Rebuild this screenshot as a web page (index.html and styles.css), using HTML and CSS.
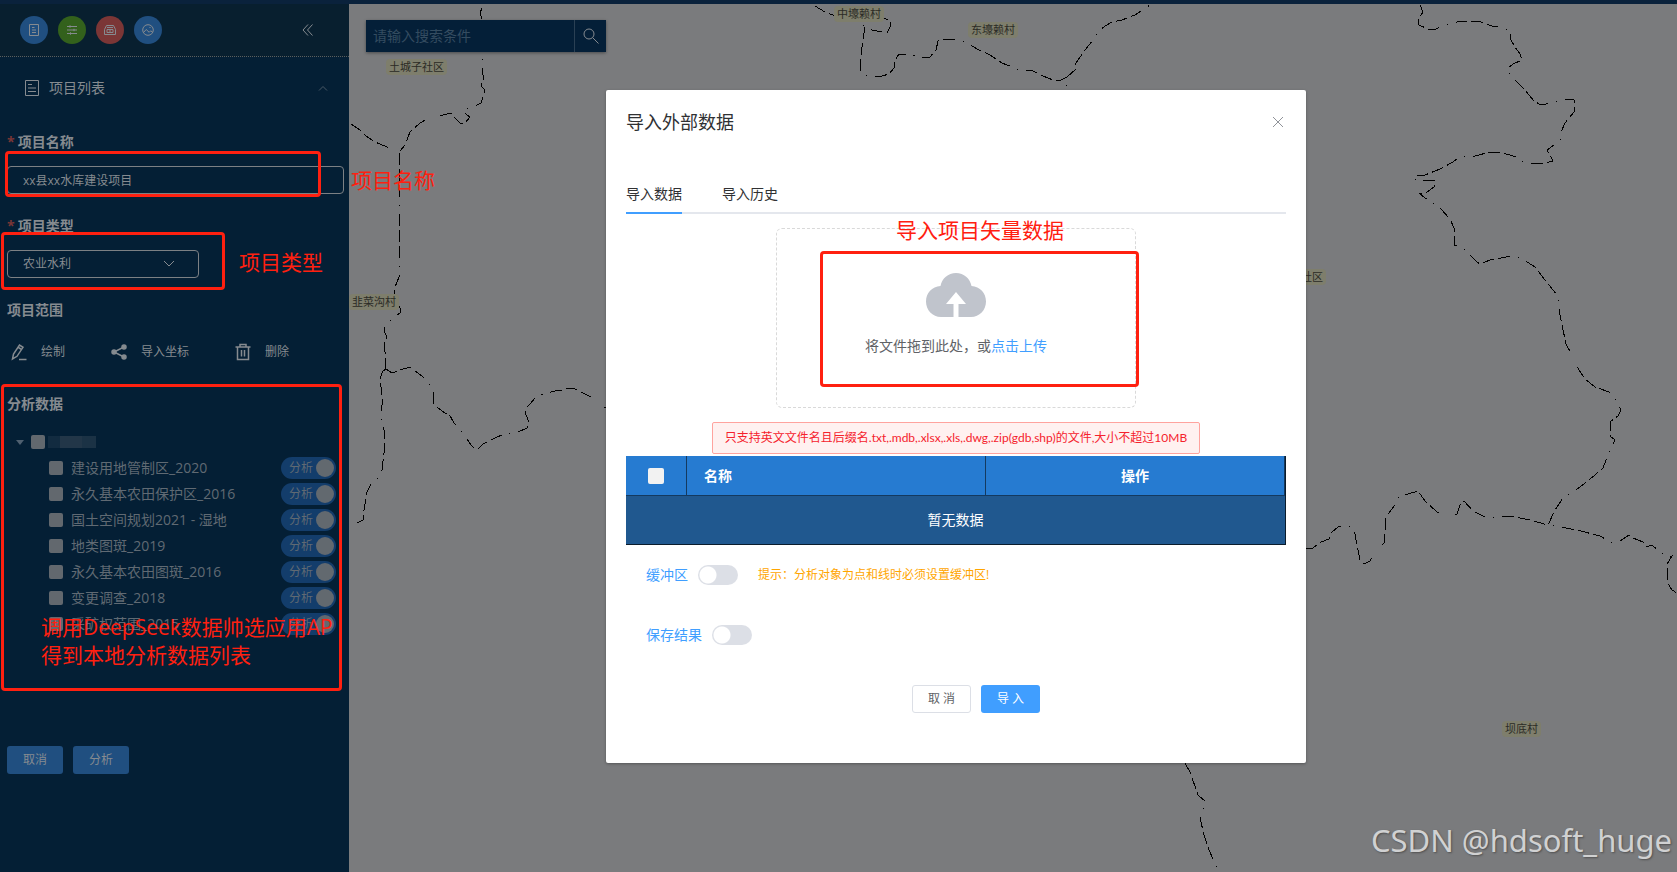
FILE: index.html
```html
<!DOCTYPE html>
<html lang="zh-CN">
	<head>
		<meta charset="UTF-8">
		<title>导入外部数据</title>
		<link rel="stylesheet" href="styles.css">
	</head>
	<body>
		<div class="topbar"></div>

		<div class="page">
			<aside class="sidebar">
				<div class="tools">
					<button class="tool blue" type="button" aria-label="列表">
						<svg width="12" height="12" viewBox="0 0 12 12"><path d="M1.500.5h9v11h-9zM4 3.500h2.500M4 6h4M4 8.500h4"/></svg>
					</button>
					<button class="tool green" type="button" aria-label="设置">
						<svg width="12" height="12" viewBox="0 0 12 12"><path d="M1 2.500h10M1 6h10M1 9.500h10M4 1.300v2.400M8 4.800v2.400M4.500 8.300v2.400"/></svg>
					</button>
					<button class="tool red" type="button" aria-label="归档">
						<svg width="12" height="12" viewBox="0 0 12 12"><path d="M.5 10.500v-5l2-4h7l2 4v5zM3 3.500h6M3 5.500h6v3H3zM5 7h2"/></svg>
					</button>
					<button class="tool blue" type="button" aria-label="图片">
						<svg width="12" height="12" viewBox="0 0 12 12"><circle cx="6" cy="6" r="5.300"/><path d="M1.500 8.500l2.700-3 3 2.800 1.500-1.500 2 1.500M7.500 3.500h1"/></svg>
					</button>
					<button class="collapse" type="button" aria-label="收起">
						<svg width="12" height="12" viewBox="0 0 12 12"><path d="M6 .5L1 6l5 5.500M10.500.5l-5 5.500 5 5.500"/></svg>
					</button>
				</div>

				<div class="panel-title">
					<svg width="16" height="18" viewBox="0 0 16 18"><path d="M1.500 1.500h13v15h-13zM4 5.500h4M4 9h8M4 12.500h8"/></svg>
					<span>项目列表</span>
					<svg class="fold" width="10" height="7" viewBox="0 0 10 7"><path d="M1 5.500l4-4 4 4"/></svg>
				</div>

				<form class="form">
					<label class="label required" for="name">项目名称</label>
					<input class="field" id="name" type="text" value="xx县xx水库建设项目">

					<label class="label required" for="type">项目类型</label>
					<div class="select">
						<select class="field" id="type">
							<option>农业水利</option>
						</select>
						<svg width="12" height="8" viewBox="0 0 12 8"><path d="M1 1l5 5 5-5"/></svg>
					</div>

					<div class="label">项目范围</div>
					<div class="actions">
						<button type="button">
							<svg width="16" height="18" viewBox="0 0 16 18"><path d="M1.500 16l1-5 6-9 3.500 2.300-6 9zM7 4.200l3.500 2.300M8 16.500h7.500"/></svg>
							绘制
						</button>
						<button type="button">
							<svg class="solid" width="16" height="16" viewBox="0 0 16 16"><path d="M13 3L3 8l10 5"/><circle cx="13" cy="3" r="2"/><circle cx="3" cy="8" r="2"/><circle cx="13" cy="13" r="2"/></svg>
							导入坐标
						</button>
						<button type="button">
							<svg width="16" height="18" viewBox="0 0 16 18"><path d="M.5 4h15M5 4V1.500h6V4M2.500 4v12.500h11V4M6.500 7v6.500M9.500 7v6.500"/></svg>
							删除
						</button>
					</div>

					<div class="label">分析数据</div>
					<ul class="tree">
						<li class="root">
							<span class="caret"></span>
							<input class="check" type="checkbox" aria-label="全选">
							<span class="mosaic"></span>
						</li>
						<li>
							<input class="check" type="checkbox" id="d1"><label for="d1">建设用地管制区_2020</label>
							<button class="pill" type="button">分析</button>
						</li>
						<li>
							<input class="check" type="checkbox" id="d2"><label for="d2">永久基本农田保护区_2016</label>
							<button class="pill" type="button">分析</button>
						</li>
						<li>
							<input class="check" type="checkbox" id="d3"><label for="d3">国土空间规划2021 - 湿地</label>
							<button class="pill" type="button">分析</button>
						</li>
						<li>
							<input class="check" type="checkbox" id="d4"><label for="d4">地类图斑_2019</label>
							<button class="pill" type="button">分析</button>
						</li>
						<li>
							<input class="check" type="checkbox" id="d5"><label for="d5">永久基本农田图斑_2016</label>
							<button class="pill" type="button">分析</button>
						</li>
						<li>
							<input class="check" type="checkbox" id="d6"><label for="d6">变更调查_2018</label>
							<button class="pill" type="button">分析</button>
						</li>
						<li>
							<input class="check" type="checkbox" id="d7"><label for="d7">采矿权范围_2015</label>
							<button class="pill" type="button">分析</button>
						</li>
					</ul>

					<div class="buttons">
						<button class="btn dim" type="button">取消</button>
						<button class="btn dim" type="button">分析</button>
					</div>
				</form>
			</aside>

			<main class="map">
				<svg class="borders" viewBox="349 4 1328 868" preserveAspectRatio="xMinYMin slice">
					<polyline points="482,8 480,13 482,19 484,40 483,55 482,64 483,75 484,80 481,83 481,86 484,89 484,94 481,103 475,106 464,110 463,112 470,117 465,123 461,124 456,119 451,113 443,115 432,116 420,123 410,132 405,145 400,151"/>
					<polyline points="351,124 360,130 366,136 375,142 387,147 399,151"/>
					<polyline points="399,153 399,277 395,287 394,294 396,300 400,308 400,313 392,319 385,327 384,331 386,335 386,340 384,345 385,352 386,369"/>
					<polyline points="386,369 392,373 400,370 410,367 423,377 429,384 433,392 434,405 445,413 449,414 454,423 460,429 471,445 475,449 478,449 483,444 495,438 504,434 518,432 527,428 529,422 526,415 525,409 530,404 536,397 543,394 555,391 565,390 567,388 575,389 583,393 591,397 598,404 601,407 606,407"/>
					<polyline points="386,369 383,371 380,378 382,395 382,405 381,415 384,430 384,453 382,470 379,477 371,484 367,492 364,510 363,520 359,522 352,525"/>
					<polyline points="815,6 825,12 833,15 857,22 865,26 872,30 887,33 890,27 890,20 882,18"/>
					<polyline points="865,27 863,40 861,55 860,69 864,75 872,77 882,76 889,74 894,68 895,60 899,54 910,54 920,58 930,57 936,50 938,41 943,39 957,40 966,42 977,49 990,55 1002,63 1017,69 1033,71 1043,76 1053,80 1059,81 1067,77 1066,90"/>
					<polyline points="1067,77 1075,70 1076,63 1085,50 1093,40 1098,32 1105,26 1112,22 1122,20 1135,15 1150,5"/>
					<polyline points="1420,5 1423,12 1418,20 1419,25 1430,30 1436,29 1445,25 1461,21 1478,21 1492,26 1502,27 1507,30 1511,30 1510,38 1515,47 1520,54 1522,60 1513,64 1507,69 1511,75 1517,82 1525,90 1534,101 1541,105 1555,102 1567,99 1574,100 1574,112 1565,123 1561,132 1561,139 1554,145 1547,150 1553,161 1545,163 1533,164 1523,162 1516,157 1500,152 1490,152 1475,156 1459,157 1453,162 1440,169 1430,173 1425,175 1413,175 1416,180 1434,180 1434,187 1426,193 1419,193 1425,198 1440,208 1450,219 1454,228 1454,245 1463,248 1477,262 1480,264 1490,260 1506,257 1514,256 1524,260 1535,267 1545,280 1553,290 1558,296 1560,315 1562,325 1566,344 1571,353 1579,370 1585,379 1595,387 1609,392 1617,401 1621,410 1618,416 1611,421 1610,436 1615,440 1610,450 1603,468 1595,475 1580,487 1563,498 1555,510 1548,525"/>
					<polyline points="1306,549 1313,548 1321,542 1329,539 1332,532 1338,527 1348,526 1354,529 1357,545 1360,560 1364,564 1370,561 1378,548 1384,543 1386,517 1395,505 1399,495 1408,494 1418,491 1425,501 1437,512 1447,516 1457,514 1460,505 1464,501 1473,511 1485,517 1494,518 1510,516 1530,520 1548,525 1560,527 1577,530 1600,536 1612,543 1620,541 1629,535 1633,538 1643,542 1646,547 1652,545 1660,552 1667,557 1672,556 1667,564 1667,582 1672,590 1677,593"/>
					<polyline points="1185,763 1190,772 1198,795 1206,802 1200,818 1204,835 1209,850 1217,868"/>
				</svg>

				<span class="place p1">中壕赖村</span>
				<span class="place p2">东壕赖村</span>
				<span class="place p3">土城子社区</span>
				<span class="place p4">韭菜沟村</span>
				<span class="place p5">社区</span>
				<span class="place p6">坝底村</span>

				<form class="search">
					<input type="text" placeholder="请输入搜索条件" aria-label="搜索">
					<button type="button" aria-label="搜索">
						<svg width="18" height="18" viewBox="0 0 18 18"><circle cx="7" cy="7" r="5"/><path d="M10.700 10.700l5.800 5.800"/></svg>
					</button>
				</form>

				<div class="watermark">CSDN @hdsoft_huge</div>
			</main>
		</div>

		<section class="dialog">
			<header class="dialog-header">
				<h2>导入外部数据</h2>
				<button type="button" aria-label="关闭">
					<svg width="12" height="12" viewBox="0 0 12 12"><path d="M1 1l10 10M11 1L1 11"/></svg>
				</button>
			</header>

			<nav class="tabs">
				<a class="active" href="#data">导入数据</a>
				<a href="#history">导入历史</a>
			</nav>

			<div class="upload">
				<svg width="60" height="44" viewBox="0 0 60 44">
					<path d="M15 44C6.500 44 0 37 0 28.500 0 20 6 13.500 14.500 13 16 5.500 22 0 30 0s14 5.500 15.500 13C54 13.500 60 20 60 28.500 60 37 53.500 44 45 44H32.500V31H40L30 19 20 31h7.500v13z"/>
				</svg>
				<p>将文件拖到此处，或<a href="#upload">点击上传</a></p>
				<span class="note note-upload">导入项目矢量数据</span>
				<span class="mark mark-upload"></span>
			</div>

			<p class="alert">只支持英文文件名且后缀名.txt,.mdb,.xlsx,.xls,.dwg,.zip(gdb,shp)的文件,大小不超过10MB</p>

			<table class="files">
				<thead>
					<tr>
						<th class="col-check"><input class="check" type="checkbox" aria-label="全选"></th>
						<th class="col-name">名称</th>
						<th>操作</th>
					</tr>
				</thead>
				<tbody>
					<tr><td colspan="3">暂无数据</td></tr>
				</tbody>
			</table>

			<div class="option">
				<label for="buffer">缓冲区</label>
				<input class="switch" type="checkbox" id="buffer">
				<span class="tip">提示：分析对象为点和线时必须设置缓冲区!</span>
			</div>
			<div class="option">
				<label for="save">保存结果</label>
				<input class="switch" type="checkbox" id="save">
			</div>

			<footer class="dialog-footer">
				<button class="btn plain" type="button">取 消</button>
				<button class="btn primary" type="button">导 入</button>
			</footer>
		</section>

		<!-- 标注 -->
		<span class="mark mark-name"></span>
		<span class="note note-name">项目名称</span>
		<span class="mark mark-type"></span>
		<span class="note note-type">项目类型</span>
		<div class="mark mark-data">
			<p class="note">调用DeepSeek数据帅选应用AP<br>得到本地分析数据列表</p>
		</div>
	</body>
</html>
```

FILE: styles.css
```css
* {
	box-sizing: border-box;
}

body {
	margin: 0;
	position: relative;
	min-height: 100vh;
	display: flex;
	flex-direction: column;
	overflow: hidden;
	font-family: "Open Sans", "Noto Sans CJK SC", sans-serif;
	font-size: 14px;
	line-height: 20px;
	color: #303133;
}

button, input, select {
	font: inherit;
	color: inherit;
	margin: 0;
}

button {
	padding: 0;
	border: 0;
	background: none;
}

a {
	text-decoration: none;
}

svg {
	fill: none;
	stroke: currentColor;
	flex: none;
}

.topbar {
	height: 4px;
	background: #0a223c;
}

.page {
	flex: 1;
	display: flex;
}

/* 左侧面板 */
.sidebar {
	flex: none;
	width: 349px;
	background: #041f35;
	color: #868b90;
}

.tools {
	display: flex;
	align-items: center;
	gap: 10px;
	height: 53px;
	padding: 0 35px 0 20px;
	background: #081f2f;
	border-bottom: 1px dotted #5a5f60;
}

.tool {
	display: flex;
	align-items: center;
	justify-content: center;
	width: 28px;
	height: 28px;
	border-radius: 50%;
}

.blue {
	background: #204f80;
}

.green {
	background: #33611c;
}

.red {
	background: #7b3636;
}

.collapse {
	display: flex;
	margin-left: auto;
}

.panel-title {
	display: flex;
	align-items: center;
	gap: 9px;
	height: 62px;
	padding: 0 21px 0 24px;
}

.fold {
	margin-left: auto;
	color: #4a5966;
}

.form {
	padding: 13px 5px 0 7px;
}

.label {
	display: block;
	margin-top: 22px;
	font-weight: bold;
}

.label:first-child {
	margin-top: 0;
}

.required:before {
	content: "*";
	margin-right: 3px;
	color: #7b3636;
}

.field {
	display: block;
	width: 100%;
	height: 28px;
	margin-top: 14px;
	padding: 0 15px;
	border: 1px solid #7c8084;
	border-radius: 4px;
	background: transparent;
	font-size: 12px;
	appearance: none;
}

.select {
	position: relative;
	width: 192px;
	max-width: 100%;
}

.select svg {
	position: absolute;
	right: 24px;
	top: 10px;
}

.actions {
	display: flex;
	gap: 46px;
	height: 28px;
	margin: 18px 0 28px 4px;
}

.actions button {
	display: flex;
	align-items: center;
	gap: 14px;
	font-size: 12px;
}

.actions svg {
	stroke-width: 1.5;
}

.solid circle {
	fill: currentColor;
}

.actions + .label {
	margin-top: 0;
}

.tree {
	margin: 15px 0 109px;
	padding: 0;
	list-style: none;
	color: #606a73;
}

.tree li {
	display: flex;
	align-items: center;
	gap: 8px;
	height: 26px;
	padding: 0 8px 0 42px;
}

.tree .root {
	gap: 3px;
	padding-left: 9px;
}

.caret {
	margin-right: 4px;
	border: 4px solid transparent;
	border-top: 5px solid #4f6070;
	border-bottom: 0;
}

.check {
	width: 14px;
	height: 14px;
	border-radius: 2px;
	background: #62686e;
	appearance: none;
}

.mosaic {
	width: 48px;
	height: 12px;
	background: linear-gradient(90deg, #122b40 12px, #223648 12px, #223648 34px, #1b3245 34px);
}

.pill {
	display: flex;
	align-items: center;
	justify-content: space-between;
	width: 55px;
	height: 22px;
	margin-left: auto;
	padding: 0 2px 0 8px;
	border-radius: 11px;
	background: #133d6b;
	font-size: 12px;
}

.pill:after {
	content: "";
	width: 18px;
	height: 18px;
	border-radius: 50%;
	background: #62696f;
}

.buttons {
	display: flex;
	gap: 10px;
}

.btn {
	height: 28px;
	padding: 0 15px;
	border: 1px solid transparent;
	border-radius: 3px;
	font-size: 12px;
	line-height: 26px;
}

.dim {
	background: #204f80;
}

/* 地图 */
.map {
	flex: 1;
	position: relative;
	overflow: hidden;
	background: #7a7b7d;
}

.borders {
	position: absolute;
	inset: 0;
	width: 100%;
	height: 100%;
	stroke: #000;
	stroke-dasharray: 12 4 12 4 12 8 1 8;
	shape-rendering: crispEdges;
}

.place {
	position: absolute;
	padding: 0 3px;
	border-radius: 4px;
	background: #7e7e6c;
	font-size: 11px;
	line-height: 16px;
	color: #2b2b25;
}

.p1 {
	left: 485px;
	top: 2px;
}

.p2 {
	left: 619px;
	top: 18px;
}

.p3 {
	left: 37px;
	top: 55px;
}

.p4 {
	left: 0;
	top: 290px;
}

.p5 {
	left: 949px;
	top: 265px;
}

.p6 {
	left: 1153px;
	top: 717px;
}

.search {
	position: relative;
	display: flex;
	width: 240px;
	height: 32px;
	margin: 16px 0 0 17px;
	background: #041f38;
	box-shadow: 0 1px 3px rgba(0, 0, 0, .4);
}

.search input {
	flex: 1;
	min-width: 0;
	padding: 0 7px;
	border: 0;
	background: none;
	color: #868b90;
}

.search input::placeholder {
	color: #344c60;
}

.search button {
	display: flex;
	align-items: center;
	justify-content: center;
	width: 32px;
	border-left: 1px solid #2a4054;
	color: #868b90;
}

.watermark {
	position: absolute;
	right: 5px;
	bottom: 12px;
	font-family: "Noto Sans", sans-serif;
	font-size: 31px;
	line-height: 40px;
	color: #d0d1d2;
	text-shadow: 1px 1px 2px #505050;
}

/* 弹窗 */
.dialog {
	position: absolute;
	top: 90px;
	left: 606px;
	width: 700px;
	padding: 20px 20px 50px;
	border-radius: 2px;
	background: #fff;
	box-shadow: 0 1px 3px rgba(0, 0, 0, .3);
}

.dialog-header {
	display: flex;
	align-items: center;
	justify-content: space-between;
	height: 24px;
	padding-right: 2px;
	color: #909399;
}

.dialog-header h2 {
	margin: 0;
	font-size: 18px;
	font-weight: normal;
	color: #303133;
}

.dialog-header button {
	display: flex;
}

.tabs {
	display: flex;
	gap: 40px;
	margin-top: 50px;
	border-bottom: 2px solid #e4e7ed;
}

.tabs a {
	height: 30px;
	margin-bottom: -2px;
	border-bottom: 2px solid transparent;
	color: #303133;
}

.tabs .active {
	border-color: #409eff;
}

.upload {
	position: relative;
	display: flex;
	flex-direction: column;
	align-items: center;
	width: 360px;
	height: 180px;
	margin: 14px auto;
	padding-top: 44px;
	border: 1px dashed #d9d9d9;
	border-radius: 6px;
}

.upload svg {
	fill: #c0c4cc;
	stroke: none;
}

.upload p {
	margin: 19px 0 0;
	color: #606266;
}

.upload a {
	color: #409eff;
}

.alert {
	width: fit-content;
	margin: 0 auto 2px;
	padding: 5px 12px;
	border: 1px solid #ffa39e;
	border-radius: 2px;
	background: #fff1f0;
	font-family: Lato, "Noto Sans CJK SC", sans-serif;
	font-size: 12px;
	color: #f5222d;
}

.files {
	width: 100%;
	table-layout: fixed;
	border-collapse: separate;
	border-spacing: 0;
	border-right: 1px solid #0b1c2c;
	color: #fff;
}

.files th {
	height: 40px;
	padding: 0;
	border-right: 1px solid #143a60;
	border-bottom: 1px solid #143a60;
	background: #267bd1;
}

.files .col-check {
	width: 61px;
}

.files .col-name {
	padding-left: 17px;
	text-align: left;
}

.files td {
	height: 49px;
	padding: 0;
	border-bottom: 1px solid #0b1c2c;
	background: #20588f;
	text-align: center;
}

.files .check {
	display: block;
	width: 16px;
	height: 16px;
	margin: 0 auto;
	background: #f2f2f2;
}

.option {
	display: flex;
	align-items: center;
	gap: 10px;
	height: 20px;
	margin: 20px 0 40px 20px;
	color: #409eff;
}

.switch {
	width: 40px;
	height: 20px;
	border-radius: 10px;
	background: radial-gradient(circle at 10px 10px, #fff 8px, #dcdfe6 9px);
	appearance: none;
}

.tip {
	margin-left: 10px;
	font-size: 12px;
	color: #ffa500;
}

.dialog-footer {
	display: flex;
	justify-content: center;
	gap: 10px;
	padding-left: 40px;
}

.plain {
	border-color: #dcdfe6;
	background: #fff;
	color: #606266;
}

.primary {
	background: #409eff;
	color: #fff;
}

/* 红色标注 */
.mark {
	position: absolute;
	border: 3px solid #ff2010;
	border-radius: 4px;
	pointer-events: none;
}

.note {
	position: absolute;
	margin: 0;
	font-size: 21px;
	line-height: 28px;
	white-space: nowrap;
	color: #ff2010;
}

.mark-name {
	left: 5px;
	top: 151px;
	width: 316px;
	height: 46px;
}

.note-name {
	left: 351px;
	top: 166px;
}

.mark-type {
	left: 1px;
	top: 232px;
	width: 224px;
	height: 58px;
}

.note-type {
	left: 239px;
	top: 248px;
}

.mark-data {
	left: 1px;
	top: 384px;
	width: 341px;
	height: 307px;
	padding: 226px 0 0 37px;
	overflow: hidden;
}

.note-upload {
	left: 119px;
	top: -13px;
}

.mark-upload {
	left: 43px;
	top: 22px;
	width: 319px;
	height: 136px;
}
```
